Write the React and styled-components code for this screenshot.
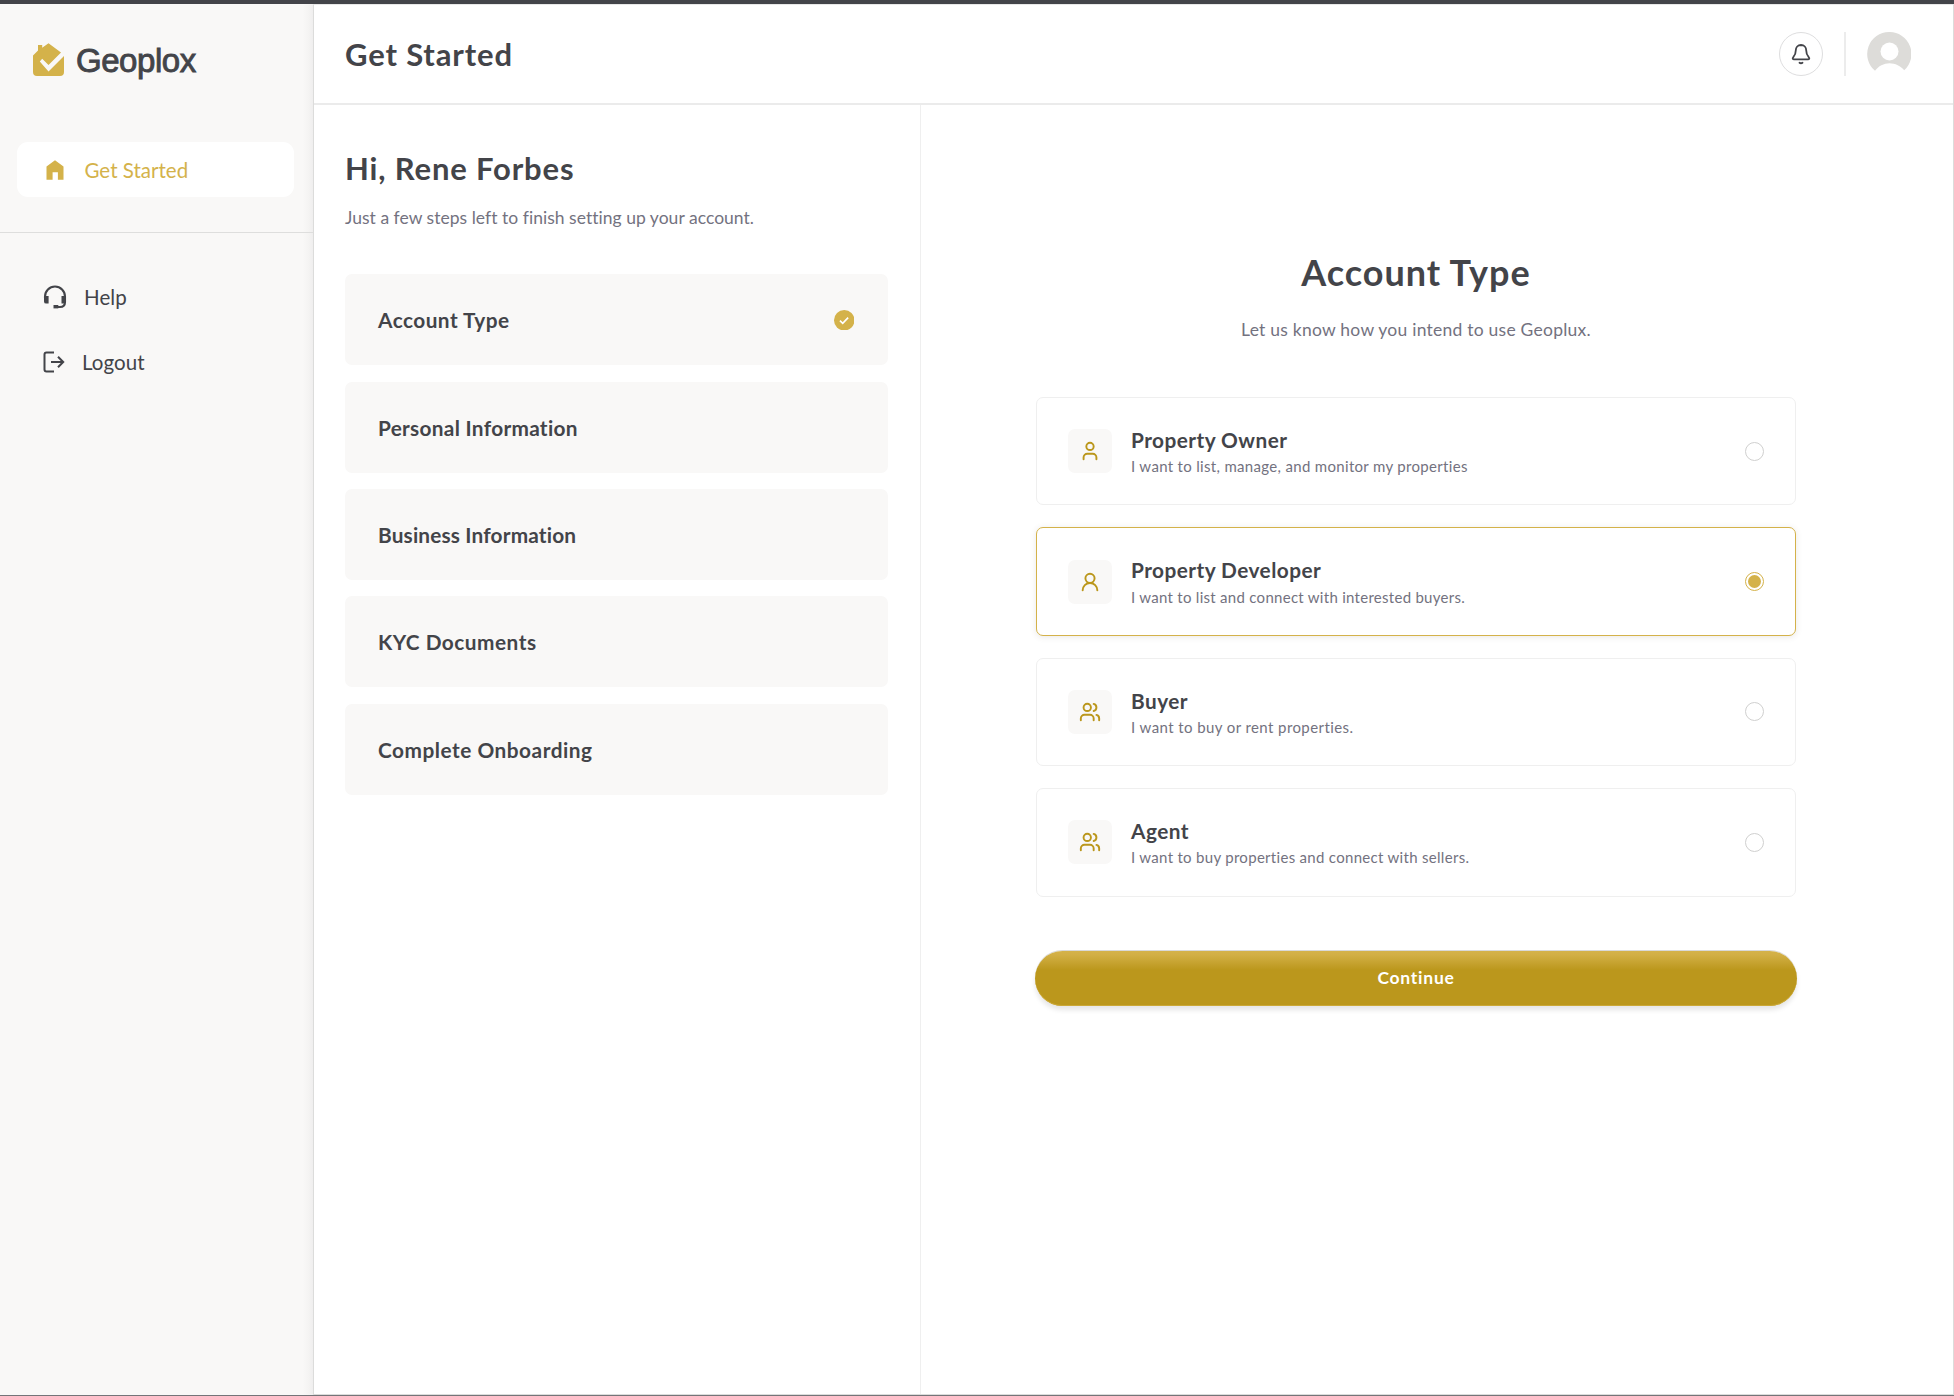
import React, { useState } from 'react';
import styled, { createGlobalStyle, css } from 'styled-components';
import { User, UserRound, Users } from 'lucide-react';

const ink = '#434449';
const muted = '#737280';
const gold = '#d4b24a';
const deepGold = '#bb971c';
const stone = '#f9f8f7';

const GlobalStyle = createGlobalStyle`
  *, *::before, *::after { box-sizing: border-box; }
  body {
    margin: 0;
    background: #fff;
    color: ${ink};
    font-family: Lato, "Liberation Sans", sans-serif;
  }
  button { font-family: inherit; color: inherit; }
`;

const Frame = styled.div`
  display: grid;
  grid-template-columns: 313px 1fr;
  height: 1396px;
  border-top: 4px solid ${ink};
  border-bottom: 1px solid #747478;
`;

const Sidebar = styled.aside`
  background: linear-gradient(to left, #efeeee 0, #f4f3f2 4px, ${stone} 10px);
`;

const Brand = styled.div`
  display: flex;
  align-items: center;
  height: 138px;
  padding: 0 0 27px 33px;
  gap: 11px;
`;

const BrandName = styled.span`
  font: 400 33px/40px "Liberation Sans", Arial, sans-serif;
  letter-spacing: -0.45px;
  -webkit-text-stroke: 0.9px ${ink};
  padding-top: 3px;
`;

const NavGroup = styled.nav`
  display: flex;
  flex-direction: column;
  padding: ${(p) => (p.$secondary ? '36px 19px' : '0 19px 35px 17px')};
  gap: 10px;
  ${(p) => !p.$secondary && css`border-bottom: 1px solid #dededd;`}
`;

const NavItem = styled.a`
  display: flex;
  align-items: center;
  height: 55px;
  border-radius: 11px;
  padding: 1px 0 0 ${(p) => (p.$active ? 28.5 : 24)}px;
  gap: ${(p) => p.$gap}px;
  font-size: 20.5px;
  letter-spacing: ${(p) => (p.$active ? 0.02 : 0.06)}px;
  color: ${(p) => (p.$active ? gold : ink)};
  background: ${(p) => (p.$active ? '#fff' : 'transparent')};
`;

const Page = styled.main`
  display: grid;
  grid-template-rows: 100px 1fr;
  border: 1px solid #dcdcdb;
  border-top-color: #e8e8e8;
`;

const Header = styled.header`
  display: flex;
  align-items: center;
  justify-content: space-between;
  padding: 0 42px 0 31px;
  border-bottom: 2px solid #ebebeb;
`;

const Heading = styled.h1`
  margin: 0;
  font-size: 31px;
  line-height: 38px;
  font-weight: 700;
  letter-spacing: 0.85px;
`;

const HeaderTools = styled.div`
  display: flex;
  align-items: center;
`;

const BellButton = styled.button`
  display: grid;
  place-items: center;
  width: 44px;
  height: 44px;
  padding: 0;
  border: 1px solid #dededf;
  border-radius: 50%;
  background: #fff;
`;

const Divider = styled.span`
  width: 2px;
  height: 44px;
  margin: 0 21px;
  background: #ececec;
`;

const Columns = styled.div`
  display: grid;
  grid-template-columns: 607px 1fr;
`;

const StepsPane = styled.section`
  padding: 44px 32px 0 31px;
  border-right: 1px solid #efefef;
`;

const Lead = styled.p`
  margin: 0;
  font-size: 17.5px;
  line-height: 22px;
  color: ${muted};
  letter-spacing: ${(p) => p.$tracking}px;
`;

const StepList = styled.div`
  display: flex;
  flex-direction: column;
  gap: 16.4px;
  margin-top: 45.3px;
`;

const Intro = styled.div`
  display: flex;
  flex-direction: column;
  gap: 20px;
`;

const Step = styled.div`
  display: flex;
  align-items: center;
  justify-content: space-between;
  height: 91px;
  padding: 0 34px 0 33px;
  border-radius: 7px;
  background: ${stone};
  font-size: 20.8px;
  line-height: 25px;
  font-weight: 700;
  letter-spacing: ${(p) => p.$tracking}px;
`;

const FormPane = styled.section`
  display: flex;
  flex-direction: column;
  align-items: center;
  width: 760px;
  margin-left: 115px;
  padding-top: 145px;
`;

const FormTitle = styled.h2`
  margin: 0 0 25px;
  font-size: 36px;
  line-height: 44px;
  font-weight: 700;
  letter-spacing: 0.95px;
`;

const Options = styled.div`
  display: flex;
  flex-direction: column;
  gap: 22px;
  width: 100%;
  margin: 56px 0 54.4px;
`;

const Option = styled.button`
  display: flex;
  align-items: center;
  width: 100%;
  height: 108.4px;
  padding: 0 31px;
  border: 1px solid ${(p) => (p.$selected ? gold : '#efefef')};
  border-radius: 7px;
  background: #fff;
  text-align: left;
  box-shadow: ${(p) => (p.$selected ? '0 1px 6px rgba(90, 80, 60, 0.13)' : 'none')};
`;

const IconTile = styled.span`
  display: grid;
  place-items: center;
  width: 44px;
  height: 44px;
  margin-right: 19px;
  border-radius: 7px;
  background: ${stone};
  color: ${deepGold};
`;

const OptionText = styled.span`
  display: flex;
  flex-direction: column;
  flex: 1;
  padding-top: 4px;
`;

const OptionName = styled.span`
  font-size: 20.8px;
  line-height: 26.3px;
  font-weight: 700;
  letter-spacing: 0.45px;
`;

const OptionNote = styled.span`
  font-size: 15px;
  line-height: 26.3px;
  color: ${muted};
  letter-spacing: ${(p) => p.$tracking}px;
`;

const Radio = styled.span`
  display: grid;
  place-items: center;
  width: 19px;
  height: 19px;
  border: 1px solid ${(p) => (p.$selected ? gold : '#d0d0cf')};
  border-radius: 50%;
  &::after {
    content: '';
    width: 13px;
    height: 13px;
    border-radius: 50%;
    background: ${(p) => (p.$selected ? gold : 'transparent')};
  }
`;

const Continue = styled.button`
  width: 762px;
  height: 55px;
  padding: 0 0 2px;
  border: 0;
  border-radius: 28px;
  background: linear-gradient(#d4b24a 0, #d2af45 4px, ${deepGold} 19px);
  color: #fff;
  font-size: 17.5px;
  font-weight: 700;
  letter-spacing: 0.75px;
  box-shadow: inset 0 -1px 0 #cba836, 0 -1px 0 #d9d9d9, 0 4px 5px rgba(0, 0, 0, 0.1);
`;

const Logo = () => (
  <svg width="32" height="34" viewBox="0 0 32 34">
    <path d="M5 7.500V2h4.200v2.800L15.500 0.300 28 9.500 15.500 22 9.200 15.700 6.800 18.500 15.500 28.500 31 13V29q0 4-4 4H4q-4 0-4-4V12.500z" fill={gold} />
  </svg>
);

const HomeIcon = () => (
  <svg width="18" height="20" viewBox="0 0 18 20">
    <path d="M.5 6.500 9 .3l8.500 6.200v13.200h-5.600v-7.500H6.600v7.500H.5z" fill={gold} />
  </svg>
);

const HeadsetIcon = () => (
  <svg width="24" height="24" viewBox="0 0 24 24" fill="none" stroke={ink} strokeWidth="2.100">
    <path d="M2 13v-1.500a10 10 0 0 1 20 0V17c0 3.200-1.800 5-5 5h-2" />
    <path d="M10.500 20h4.800V23.400h-4.800z" fill={ink} stroke="none" />
    <path d="M1 11h4.600v7.600H3.200Q1 18.600 1 16.400zM18.500 11H23v5.400q0 2.200-2.200 2.200h-2.300z" fill={ink} stroke="none" />
  </svg>
);

const LogoutIcon = () => (
  <svg width="22" height="22" viewBox="0 0 22 22" fill="none" stroke={ink} strokeWidth="2">
    <path d="M11 1.500H3.500Q1.500 1.500 1.500 3.500v15q0 2 2 2h7.500M8 11h12.300M15 5.800l5.200 5.200-5.200 5.200" />
  </svg>
);

const BellIcon = () => (
  <svg width="20" height="22" viewBox="0 0 20 22" fill="none" stroke={ink} strokeWidth="1.800" strokeLinecap="round" strokeLinejoin="round">
    <path d="M10 2c-3.200 0-5.200 2.400-5.200 5.300 0 3.500-.6 4.800-2.500 6.900-.9 1.100-.8 2.100.4 2.100h14.600c1.200 0 1.300-1 .4-2.100-1.900-2.100-2.500-3.400-2.500-6.900C15.200 4.400 13.200 2 10 2z" />
    <path d="M8.500 19.700c.9.700 2.100.7 3 0" />
  </svg>
);

const Avatar = () => (
  <svg width="44" height="44" viewBox="0 0 44 44">
    <path d="M22 0a22 22 0 0 1 15.200 38.300C34 34 28 31.200 22.500 31.200S11.300 34 8 38.800A22 22 0 0 1 22 0z" fill="#dddcd9" />
    <circle cx="22.500" cy="19.500" r="9" fill="#fff" />
  </svg>
);

const CheckBadge = () => (
  <svg width="20.500" height="20.500" viewBox="0 0 20 20">
    <circle cx="10" cy="10" r="10" fill={gold} />
    <path d="M5.800 10.300l2.700 2.700 5.300-5.600" fill="none" stroke="#fff" strokeWidth="1.600" />
  </svg>
);

const steps = [
  { name: 'Account Type', tracking: 0.47, done: true },
  { name: 'Personal Information', tracking: 0.3 },
  { name: 'Business Information', tracking: 0.17 },
  { name: 'KYC Documents', tracking: 0.5 },
  { name: 'Complete Onboarding', tracking: 0.52 },
];

const options = [
  { name: 'Property Owner', note: 'I want to list, manage, and monitor my properties', tracking: 0.32, icon: User },
  { name: 'Property Developer', note: 'I want to list and connect with interested buyers.', tracking: 0.28, icon: UserRound },
  { name: 'Buyer', note: 'I want to buy or rent properties.', tracking: 0.41, icon: Users },
  { name: 'Agent', note: 'I want to buy properties and connect with sellers.', tracking: 0.3, icon: Users },
];

export default function App() {
  const [selected, setSelected] = useState('Property Developer');
  return (
    <>
      <GlobalStyle />
      <Frame>
        <Sidebar>
          <Brand>
            <Logo />
            <BrandName>Geoplox</BrandName>
          </Brand>
          <NavGroup>
            <NavItem $active $gap={21}><HomeIcon />Get Started</NavItem>
          </NavGroup>
          <NavGroup $secondary>
            <NavItem $gap={17}><HeadsetIcon />Help</NavItem>
            <NavItem $gap={17}><LogoutIcon />Logout</NavItem>
          </NavGroup>
        </Sidebar>
        <Page>
          <Header>
            <Heading>Get Started</Heading>
            <HeaderTools>
              <BellButton aria-label="Notifications"><BellIcon /></BellButton>
              <Divider />
              <Avatar />
            </HeaderTools>
          </Header>
          <Columns>
            <StepsPane>
              <Intro>
                <Heading as="h2">Hi, Rene Forbes</Heading>
                <Lead $tracking={0.03}>Just a few steps left to finish setting up your account.</Lead>
              </Intro>
              <StepList>
                {steps.map((s) => (
                  <Step key={s.name} $tracking={s.tracking}>
                    {s.name}
                    {s.done && <CheckBadge />}
                  </Step>
                ))}
              </StepList>
            </StepsPane>
            <FormPane>
              <FormTitle>Account Type</FormTitle>
              <Lead $tracking={0.24}>Let us know how you intend to use Geoplux.</Lead>
              <Options>
                {options.map(({ name, note, tracking, icon: Icon }) => (
                  <Option key={name} $selected={selected === name} onClick={() => setSelected(name)}>
                    <IconTile><Icon size={22} strokeWidth={2.1} /></IconTile>
                    <OptionText>
                      <OptionName>{name}</OptionName>
                      <OptionNote $tracking={tracking}>{note}</OptionNote>
                    </OptionText>
                    <Radio $selected={selected === name} />
                  </Option>
                ))}
              </Options>
              <Continue>Continue</Continue>
            </FormPane>
          </Columns>
        </Page>
      </Frame>
    </>
  );
}
